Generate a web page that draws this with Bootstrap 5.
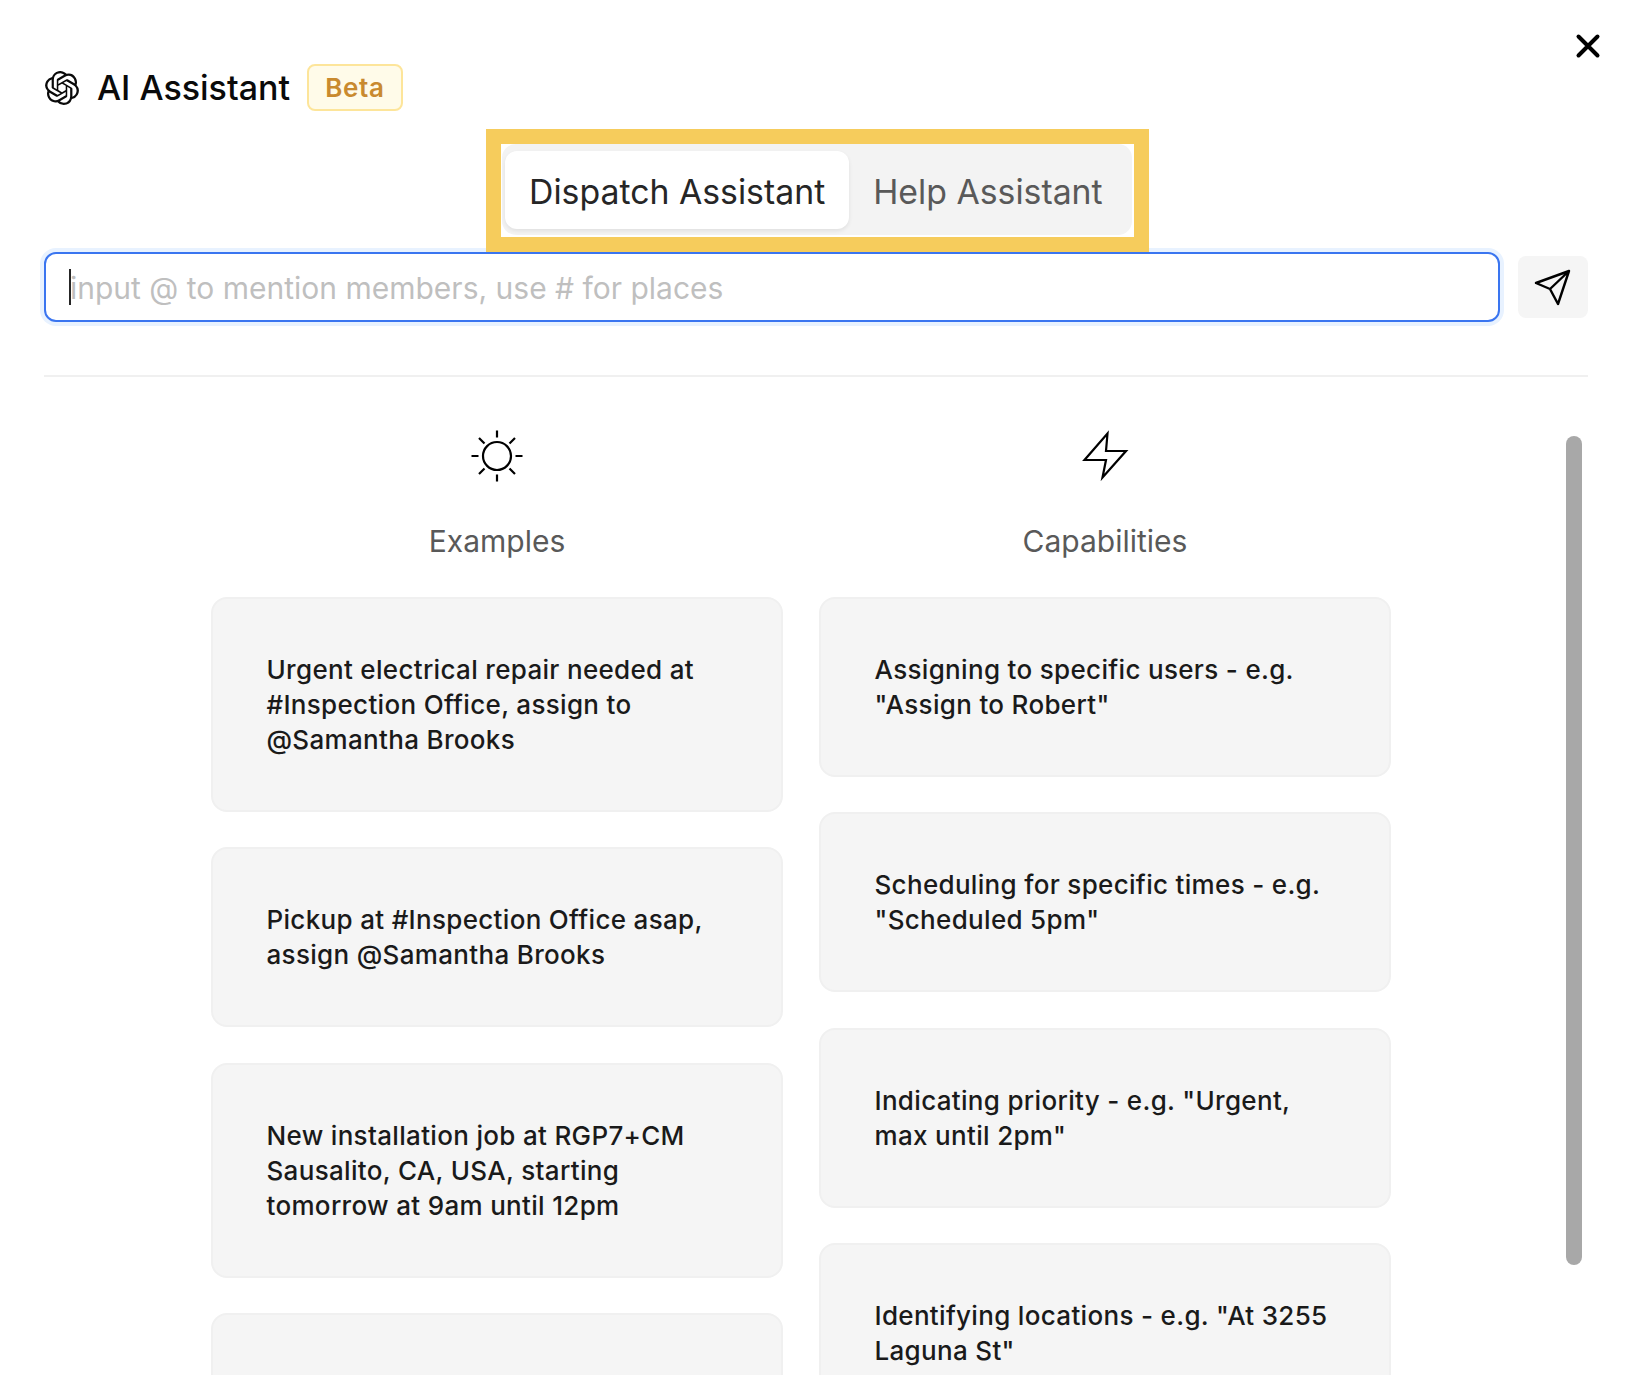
<!DOCTYPE html>
<html lang="en">
<head>
<meta charset="utf-8">
<title>AI Assistant</title>
<link href="https://cdn.jsdelivr.net/npm/bootstrap@5.3.0/dist/css/bootstrap.min.css" rel="stylesheet">
<style>
body{font-family:Inter,"Liberation Sans",sans-serif;background:#fff;color:#000;height:1400px;overflow:hidden;}
.shell{position:relative;padding:64px 40px 0 44px;}
.close-x{position:absolute;top:33px;right:27px;width:26px;height:26px;padding:0;border:0;background:none;line-height:0;}
.brand-row{height:47px;}
.brand-logo{width:34px;height:34px;margin-left:1px;margin-right:18px;}
.brand-title{font-size:34px;font-weight:500;color:#0a0a0a;line-height:47px;margin:0;}
.beta-tag{margin-left:17px;width:96px;height:47px;border:2px solid #fde59a;border-radius:8px;background:#fffbe9;color:#c98a2f;font-size:26px;font-weight:600;display:flex;align-items:center;justify-content:center;letter-spacing:.7px;}
.hl-box{position:relative;z-index:2;width:663px;margin:18px 0 0 442px;border:15px solid #f6cc5c;background:#fff;height:123px;}
.seg-track{background:#f3f3f3;border-radius:14px;height:91px;margin-left:1px;width:630px;padding:7px 3px 0;flex-wrap:nowrap;}
.seg-tab{height:78px;font-size:33.8px;line-height:82px;padding:0 24px;color:#595959;border-radius:12px;white-space:nowrap;}
.seg-tab.is-on{background:#fff;color:#262626;box-shadow:0 2px 4px rgba(0,0,0,.08);}
.ask-row{gap:18px;}
.ask-wrap{position:relative;flex:1 1 auto;}
.ask-input.form-control{height:70px;border:2px solid #3a75f0;border-radius:12px;box-shadow:0 0 0 4px #e8f2ff;font-size:30px;padding:2px 24px 0;color:#262626;font-family:inherit;}
.ask-input.form-control::placeholder{color:#bfbfbf;opacity:1;}
.caret-bar{position:absolute;left:25px;top:17px;width:2px;height:36px;background:#262626;}
.send-btn.btn{width:70px;height:62px;padding:0;background:#f5f5f5;border:0;border-radius:8px;flex:none;line-height:0;}
.rule-line{margin:53px 0 0;border:0;border-top:2px solid #f0f0f0;opacity:1;}
.scroller{position:relative;height:998px;overflow:hidden;}
.thumb-bar{position:absolute;right:6px;top:59px;width:16px;height:829px;border-radius:8px;background:#a8a8a8;}
.col-stack{padding-left:167px;gap:36px;}
.prompt-col{width:572px;flex:none;}
.col-icon{height:52px;margin-top:53px;display:flex;justify-content:center;line-height:0;}
.col-label{font-size:30px;line-height:40px;color:#595959;text-align:center;margin:0;padding-top:39px;height:115px;}
.prompt-card.card{background:#f5f5f5;border:2px solid #f0f0f0;border-radius:16px;padding:53px 40px 53px 53.5px;font-size:26px;font-weight:500;line-height:35px;color:#1a1a1a;margin-bottom:35.3px;flex:none;letter-spacing:.32px;}
.prompt-card.card.is-cut{height:200px;}
</style>
</head>
<body>
<div class="shell">
  <button class="close-x" type="button" aria-label="Close">
    <svg width="26" height="26" viewBox="0 0 26 26"><path d="M3.500 3.500l19 19M22.500 3.500l-19 19" stroke="#000" stroke-width="4" stroke-linecap="round" fill="none"/></svg>
  </button>

  <div class="brand-row d-flex align-items-center">
    <svg class="brand-logo" viewBox="0 0 24 24" fill="#0a0a0a"><path d="M22.2819 9.8211a5.9847 5.9847 0 0 0-.5157-4.9108 6.0462 6.0462 0 0 0-6.5098-2.9A6.0651 6.0651 0 0 0 4.9807 4.1818a5.9847 5.9847 0 0 0-3.9977 2.9 6.0462 6.0462 0 0 0 .7427 7.0966 5.98 5.98 0 0 0 .511 4.9107 6.051 6.051 0 0 0 6.5146 2.9001A5.9847 5.9847 0 0 0 13.2599 24a6.0557 6.0557 0 0 0 5.7718-4.2058 5.9894 5.9894 0 0 0 3.9977-2.9001 6.0557 6.0557 0 0 0-.7475-7.0729zm-9.022 12.6081a4.4755 4.4755 0 0 1-2.8764-1.0408l.1419-.0804 4.7783-2.7582a.7948.7948 0 0 0 .3927-.6813v-6.7369l2.02 1.1686a.071.071 0 0 1 .038.052v5.5826a4.504 4.504 0 0 1-4.4945 4.4944zm-9.6607-4.1254a4.4708 4.4708 0 0 1-.5346-3.0137l.142.0852 4.783 2.7582a.7712.7712 0 0 0 .7806 0l5.8428-3.3685v2.3324a.0804.0804 0 0 1-.0332.0615L9.74 19.9502a4.4992 4.4992 0 0 1-6.1408-1.6464zM2.3408 7.8956a4.485 4.485 0 0 1 2.3655-1.9728V11.6a.7664.7664 0 0 0 .3879.6765l5.8144 3.3543-2.0201 1.1685a.0757.0757 0 0 1-.071 0l-4.8303-2.7865A4.504 4.504 0 0 1 2.3408 7.872zm16.5963 3.8558L13.1038 8.364 15.1192 7.2a.0757.0757 0 0 1 .071 0l4.8303 2.7913a4.4944 4.4944 0 0 1-.6765 8.1042v-5.6772a.79.79 0 0 0-.407-.667zm2.0107-3.0231l-.142-.0852-4.7735-2.7818a.7759.7759 0 0 0-.7854 0L9.409 9.2297V6.8974a.0662.0662 0 0 1 .0284-.0615l4.8303-2.7866a4.4992 4.4992 0 0 1 6.6802 4.66zM8.3065 12.863l-2.02-1.1638a.0804.0804 0 0 1-.038-.0567V6.0742a4.4992 4.4992 0 0 1 7.3757-3.4537l-.142.0805L8.704 5.459a.7948.7948 0 0 0-.3927.6813zm1.0976-2.3654l2.602-1.4998 2.6069 1.4998v2.9994l-2.5974 1.4997-2.6067-1.4997Z"/></svg>
    <h1 class="brand-title">AI Assistant</h1>
    <span class="beta-tag">Beta</span>
  </div>

  <div class="hl-box">
    <div class="seg-track nav d-flex">
      <div class="seg-tab is-on">Dispatch Assistant</div>
      <div class="seg-tab">Help Assistant</div>
    </div>
  </div>

  <div class="ask-row d-flex align-items-center">
    <div class="ask-wrap">
      <input class="ask-input form-control" type="text" placeholder="input @ to mention members, use # for places">
      <span class="caret-bar"></span>
    </div>
    <button class="send-btn btn" type="button" aria-label="Send">
      <svg width="38" height="38" viewBox="0 0 38 38"><path d="M35 3L2 15l14 6 8 15zM35 3L16 21" fill="none" stroke="#000" stroke-width="2.400" stroke-linejoin="round"/></svg>
    </button>
  </div>

  <hr class="rule-line">

  <div class="scroller">
    <div class="thumb-bar"></div>
    <div class="col-stack d-flex align-items-start">
      <div class="prompt-col d-flex flex-column">
        <div class="col-icon">
          <svg width="52" height="52" viewBox="0 0 52 52"><g fill="none" stroke="#000" stroke-width="2.200"><circle cx="26" cy="26" r="14"/><path d="M26 .5v7M26 44.500v7M.5 26h7M44.500 26h7M8 8l5.500 5.500M38.500 38.500L44 44M8 44l5.500-5.500M38.500 13.500L44 8"/></g></svg>
        </div>
        <p class="col-label">Examples</p>
        <div class="prompt-card card">Urgent electrical repair needed at #Inspection Office, assign to @Samantha Brooks</div>
        <div class="prompt-card card">Pickup at #Inspection Office asap, assign @Samantha Brooks</div>
        <div class="prompt-card card">New installation job at RGP7+CM Sausalito, CA, USA, starting tomorrow at 9am until 12pm</div>
        <div class="prompt-card card is-cut"></div>
      </div>
      <div class="prompt-col d-flex flex-column">
        <div class="col-icon">
          <svg width="52" height="52" viewBox="0 0 52 52"><path d="M28.500 3.500L27 21h20L23.500 47.500 27 30H5.500z" fill="none" stroke="#000" stroke-width="2.200" stroke-linejoin="miter"/></svg>
        </div>
        <p class="col-label">Capabilities</p>
        <div class="prompt-card card">Assigning to specific users - e.g. "Assign to Robert"</div>
        <div class="prompt-card card">Scheduling for specific times - e.g. "Scheduled 5pm"</div>
        <div class="prompt-card card">Indicating priority - e.g. "Urgent, max until 2pm"</div>
        <div class="prompt-card card">Identifying locations - e.g. "At 3255 Laguna St"</div>
      </div>
    </div>
  </div>
</div>
<script src="https://cdn.jsdelivr.net/npm/bootstrap@5.3.0/dist/js/bootstrap.bundle.min.js"></script>
</body>
</html>
